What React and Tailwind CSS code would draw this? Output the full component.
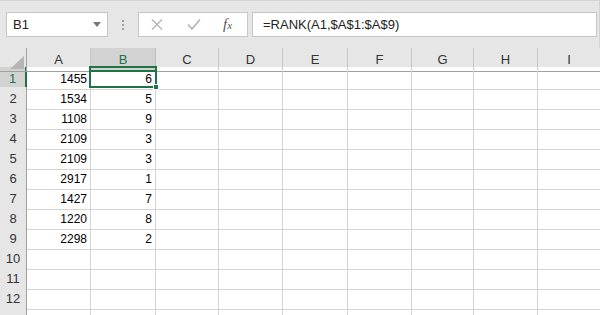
import React from "react";

const cols = ["A", "B", "C", "D", "E", "F", "G", "H", "I"];

const data = [
  [1455, 6],
  [1534, 5],
  [1108, 9],
  [2109, 3],
  [2109, 3],
  [2917, 1],
  [1427, 7],
  [1220, 8],
  [2298, 2],
];

const gridCols =
  "grid grid-cols-[27px_64px_65px_63px_64px_65px_64px_62px_64px_63px]";

function NameBox() {
  return (
    <div className="ml-[6px] flex h-[25px] w-[102px] items-center justify-between border border-[#c6c6c6] bg-white pl-[6px] pr-[6px]">
      <span className="text-[13px] text-[#222]">B1</span>
      <svg width="8" height="5" viewBox="0 0 8 5">
        <path d="M0 0h8L4 5z" fill="#777" />
      </svg>
    </div>
  );
}

function FormulaButtons() {
  return (
    <div className="ml-[14px] flex h-[25px] w-[110px] items-center border border-[#c6c6c6] bg-white">
      <svg className="ml-[12px]" width="12" height="11" viewBox="0 0 12 11">
        <path d="M1 0.5l10 10M11 0.5l-10 10" stroke="#b4b4b4" strokeWidth="1.4" />
      </svg>
      <svg className="ml-[24px]" width="14" height="11" viewBox="0 0 14 11">
        <path d="M1 5.5l4 4.5 8-9.5" stroke="#b4b4b4" strokeWidth="1.6" fill="none" />
      </svg>
      <span
        className="ml-[22px] text-[15px] italic text-[#555]"
        style={{ fontFamily: '"Liberation Serif", serif' }}
      >
        f<span className="text-[11px]">x</span>
      </span>
    </div>
  );
}

export default function App() {
  return (
    <div
      className="h-[315px] w-[600px] overflow-hidden bg-white"
      style={{ fontFamily: '"Liberation Sans", Arial, sans-serif' }}
    >
      {/* formula toolbar */}
      <div className="flex h-[48px] items-start border-t border-r border-[#d4d4d4] bg-[#e6e6e6] pt-[11px]">
        <NameBox />
        <div className="ml-[14px] mt-[8px] flex flex-col gap-[2px]">
          <div className="h-[2px] w-[2px] bg-[#a0a0a0]" />
          <div className="h-[2px] w-[2px] bg-[#a0a0a0]" />
          <div className="h-[2px] w-[2px] bg-[#a0a0a0]" />
        </div>
        <FormulaButtons />
        <div className="ml-[4px] mr-[2px] flex h-[25px] flex-1 items-center border border-[#c6c6c6] bg-white pl-[10px]">
          <span className="text-[13px] text-[#222]">=RANK(A1,$A$1:$A$9)</span>
        </div>
      </div>

      {/* sheet */}
      <div className="relative">
        <div className={`${gridCols} h-[19px] bg-[#e6e6e6]`}>
          <div className="relative border-r border-b border-[#a0a0a0]">
            <svg className="absolute right-[2px] bottom-[2px]" width="14" height="13" viewBox="0 0 14 13">
              <path d="M14 0v13H0z" fill="#b5b5b5" />
            </svg>
          </div>
          {cols.map((c) =>
            c === "B" ? (
              <div
                key={c}
                className="flex items-center justify-center border-r border-b-2 border-r-[#bdbdbd] border-b-[#217346] bg-[#d2d2d2] pt-[2px] text-[13px] text-[#217346]"
              >
                {c}
              </div>
            ) : (
              <div
                key={c}
                className="flex items-center justify-center border-r border-b border-r-[#c6c6c6] border-b-[#a0a0a0] pt-[1px] text-[13px] text-[#333]"
              >
                {c}
              </div>
            )
          )}
          <div />
        </div>

        {Array.from({ length: 13 }, (_, i) => {
          const row = data[i];
          return (
            <div key={i} className={`${gridCols} h-[20px]`}>
              <div
                className={
                  i === 0
                    ? "flex items-center justify-center border-r-2 border-b border-r-[#217346] border-b-[#c6c6c6] bg-[#d2d2d2] pt-[2px] text-[13px] text-[#217346]"
                    : "flex items-center justify-center border-r border-b border-r-[#a0a0a0] border-b-[#c6c6c6] bg-[#e6e6e6] pt-[2px] text-[13px] text-[#333]"
                }
              >
                {i < 12 ? i + 1 : ""}
              </div>
              {cols.map((c, j) => (
                <div
                  key={c}
                  className="flex items-end justify-end border-r border-b border-[#d4d4d4] pr-[3px] pb-[1px] text-[12px] text-black"
                >
                  {row && j < 2 ? row[j] : ""}
                </div>
              ))}
              <div className="border-b border-[#d4d4d4]" />
            </div>
          );
        })}

        {/* active cell */}
        <div className="absolute left-[89px] top-[18px] h-[22px] w-[68px] border-2 border-[#217346]" />
        <div className="absolute left-[153px] top-[36px] h-[6px] w-[6px] border border-white bg-[#217346]" />
      </div>
    </div>
  );
}
